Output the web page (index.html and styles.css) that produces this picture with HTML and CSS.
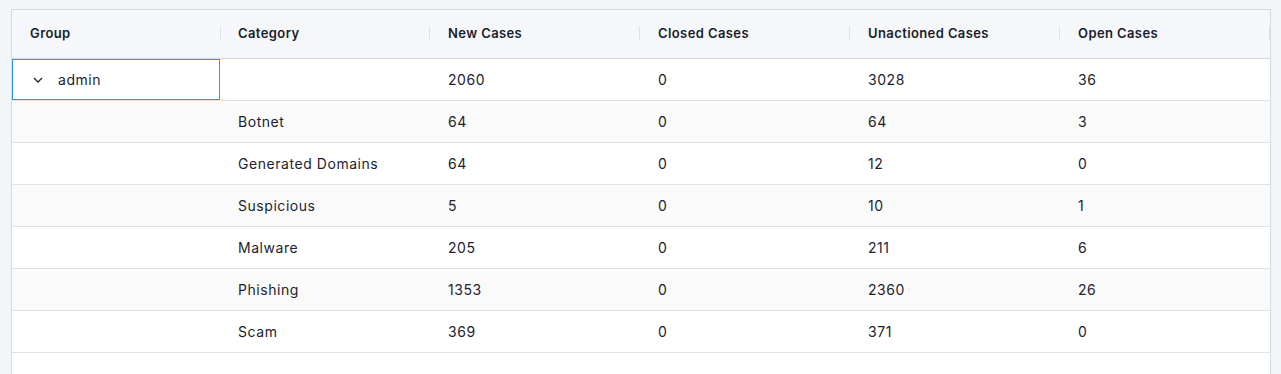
FILE: index.html
```html
<!DOCTYPE html>
<html>
<head>
<meta charset="utf-8">
<link rel="stylesheet" href="styles.css">
</head>
<body>
<div class="page">
  <div class="grid">
    <div class="row header">
      <div class="cell hcell"><span class="label">Group</span><span class="sep"></span></div>
      <div class="cell hcell"><span class="label">Category</span><span class="sep"></span></div>
      <div class="cell hcell"><span class="label">New Cases</span><span class="sep"></span></div>
      <div class="cell hcell"><span class="label">Closed Cases</span><span class="sep"></span></div>
      <div class="cell hcell"><span class="label">Unactioned Cases</span><span class="sep"></span></div>
      <div class="cell hcell"><span class="label">Open Cases</span><span class="sep"></span></div>
    </div>
    <div class="row group-row">
      <div class="cell focused"><svg class="chev" width="10" height="6" viewBox="0 0 10 6"><path d="M1 1 L5 5 L9 1" fill="none" stroke="#1f2433" stroke-width="1.3"/></svg><span>admin</span></div>
      <div class="cell"></div>
      <div class="cell">2060</div>
      <div class="cell">0</div>
      <div class="cell">3028</div>
      <div class="cell">36</div>
    </div>
    <div class="row alt">
      <div class="cell"></div><div class="cell">Botnet</div><div class="cell">64</div><div class="cell">0</div><div class="cell">64</div><div class="cell">3</div>
    </div>
    <div class="row">
      <div class="cell"></div><div class="cell">Generated Domains</div><div class="cell">64</div><div class="cell">0</div><div class="cell">12</div><div class="cell">0</div>
    </div>
    <div class="row alt">
      <div class="cell"></div><div class="cell">Suspicious</div><div class="cell">5</div><div class="cell">0</div><div class="cell">10</div><div class="cell">1</div>
    </div>
    <div class="row">
      <div class="cell"></div><div class="cell">Malware</div><div class="cell">205</div><div class="cell">0</div><div class="cell">211</div><div class="cell">6</div>
    </div>
    <div class="row alt">
      <div class="cell"></div><div class="cell">Phishing</div><div class="cell">1353</div><div class="cell">0</div><div class="cell">2360</div><div class="cell">26</div>
    </div>
    <div class="row">
      <div class="cell"></div><div class="cell">Scam</div><div class="cell">369</div><div class="cell">0</div><div class="cell">371</div><div class="cell">0</div>
    </div>
  </div>
</div>
</body>
</html>
```
FILE: styles.css
```css
html, body {
  margin: 0;
  padding: 0;
  background: #f3f6f9;
  overflow: hidden;
}
.page {
  padding: 9px 11px 0 11px;
  height: 365px;
  font-family: "Inter", "Liberation Sans", sans-serif;
  color: #1d2230;
}
.grid {
  border: 1px solid #d6dadf;
  border-bottom: none;
  background: #fff;
  height: 380px;
  width: 1258px;
}
.row {
  display: grid;
  grid-template-columns: 208px 210px 210px 210px 210px 210px;
  height: 41px;
  border-bottom: 1px solid #dde2eb;
  background: #fff;
}
.row.alt {
  background: #fafafa;
}
.row.header {
  height: 48px;
  background: #f5f7fa;
  border-bottom: 1px solid #d6dadf;
}
.cell {
  display: flex;
  align-items: center;
  padding-left: 18px;
  font-size: 14px;
  letter-spacing: 0.55px;
  box-sizing: border-box;
  min-width: 0;
}
.hcell {
  font-size: 13px;
  font-weight: 600;
  letter-spacing: 0.4px;
  color: #181d2c;
  padding-bottom: 2px;
}
.hcell .label {
  flex: 1;
}
.hcell .sep {
  width: 1px;
  height: 14px;
  background: #dde2ea;
}
.hcell:first-child .sep {
  margin-right: -1px;
}
.focused {
  border: 1px solid #2a97e8;
  padding-left: 20px;
}
.chev {
  margin-right: 15px;
}
```
